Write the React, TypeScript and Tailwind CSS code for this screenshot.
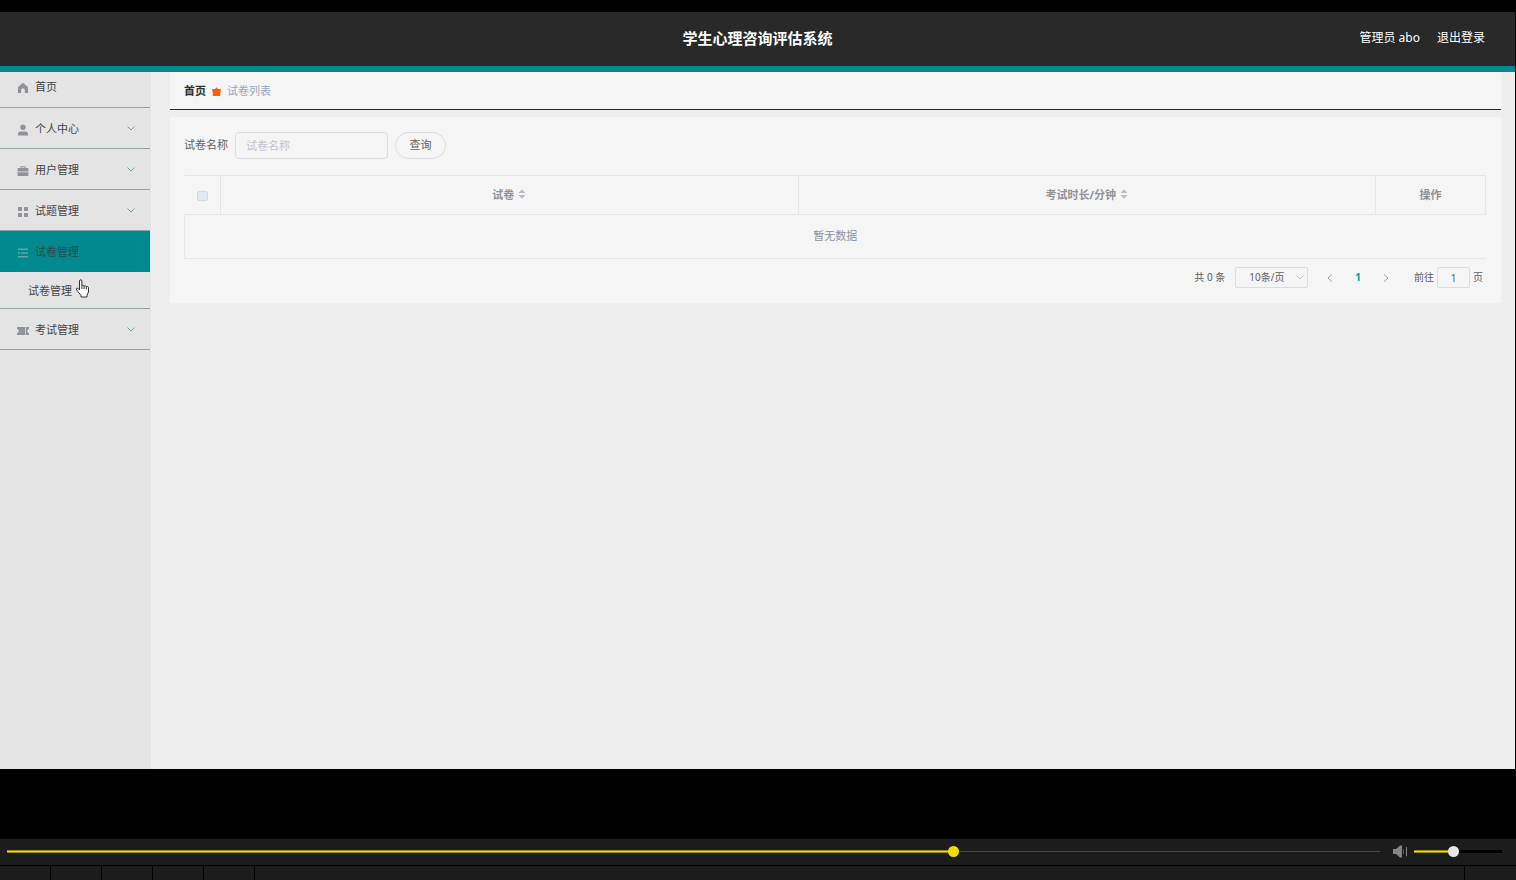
import React, { useState } from "react";

interface MenuItem {
  id: number;
  name: string;
  icon: React.ReactNode;
  children?: string[];
}

const HomeIcon = () => (
  <svg width="12" height="12" viewBox="0 0 12 12" fill="currentColor">
    <path d="M6 .8 11 5v6H7.800V8.200C7.800 6.900 7.100 6.200 6 6.200S4.200 6.900 4.200 8.200V11H1V5z" />
  </svg>
);

const UserIcon = () => (
  <svg width="12" height="12" viewBox="0 0 12 12" fill="currentColor">
    <circle cx="6" cy="3.3" r="2.7" />
    <path d="M1 11.400V9.800C1 8.300 2 7.400 3.500 7.400h5c1.500 0 2.500.9 2.500 2.400v1.600z" />
  </svg>
);

const CaseIcon = () => (
  <svg width="12" height="12" viewBox="0 0 12 12" fill="currentColor">
    <path d="M3.500 3V1.300h5V3h-1V2.200h-3V3z" />
    <path d="M.6 3h10.800v3.500H.6zM.6 7.300h10.800V11H.6z" />
  </svg>
);

const GridIcon = () => (
  <svg width="12" height="12" viewBox="0 0 12 12" fill="currentColor">
    <path d="M1 1h4v4H1zM7 1h4v4H7zM1 7h4v4H1zM7 7h4v4H7z" />
  </svg>
);

const ListIcon = () => (
  <svg width="12" height="12" viewBox="0 0 12 12" fill="currentColor">
    <path d="M1 1.500h10v1.500H1zM1 5.300h2v1.500H1zM4 5.300h7v1.500H4zM1 9h10v1.500H1z" />
  </svg>
);

const TicketIcon = () => (
  <svg width="12" height="12" viewBox="0 0 12 12" fill="currentColor">
    <path d="M0 2h8.300v8H0V8c1 0 1.700-.8 1.700-2S1 4 0 4zM9 2h3v2c-1 0-1.700.8-1.700 2S11 8 12 8v2H9z" />
  </svg>
);

const GiftIcon = () => (
  <svg width="9" height="10" viewBox="0 0 9 10" fill="#ff5c0a">
    <path d="M.3 2h2.900L4.500.3 5.800 2h2.900v3H8.200v4H.8V5H.3z" />
  </svg>
);

const Chevron = ({ className, d }: { className: string; d: string }) => (
  <svg
    className={className}
    width="8"
    height="8"
    viewBox="0 0 8 8"
    fill="none"
    stroke="currentColor"
  >
    <path d={d} />
  </svg>
);

const DOWN = "M.5 2.500 4 6l3.500-3.500";
const LEFT = "M5.800.5 2 4l3.800 3.500";
const RIGHT = "M2.200.5 6 4 2.200 7.500";

const SortIcon = () => (
  <svg
    className="mb-0.5"
    width="8"
    height="10"
    viewBox="0 0 8 10"
    fill="#b9bcc4"
  >
    <path d="M4 .3 7.500 4h-7zM4 9.700.5 6h7z" />
  </svg>
);

const HandCursor = () => (
  <svg
    className="pointer-events-none absolute left-[75px] top-[7px]"
    width="15"
    height="19"
    viewBox="0 0 15 19"
    fill="#fff"
    stroke="#333"
    strokeLinejoin="round"
  >
    <path d="M4.500 11V2c0-1.700 2.400-1.700 2.400 0v5c0-1 2.200-1 2.200.4 0-1 2.200-.9 2.200.5 0-.8 2.200-.7 2.200.8V13l-1.500 3.200V18H6v-1.500L2.800 12.500c-.7-1-1.800-2-1.500-2.900.6-1.100 2.200-.2 3.200 1.400z" />
    <path d="M6.900 7v3M9.100 7.400V10M11.300 8v2.300" />
  </svg>
);

const SpeakerIcon = () => (
  <svg width="15" height="13" viewBox="0 0 15 13" fill="#858585">
    <path d="M0 4h3l4-3.500h2v12H7L3 9H0z" />
    <path d="M10 4h1v5h-1z" fill="#555" />
    <path d="M13 2h1v9h-1z" />
  </svg>
);

const menu: MenuItem[] = [
  { id: 2, name: "个人中心", icon: <UserIcon /> },
  { id: 3, name: "用户管理", icon: <CaseIcon /> },
  { id: 4, name: "试题管理", icon: <GridIcon /> },
  { id: 5, name: "试卷管理", icon: <ListIcon />, children: ["试卷管理"] },
  { id: 6, name: "考试管理", icon: <TicketIcon /> },
];

const Sidebar: React.FC = () => {
  const [openId, setOpenId] = useState(5);

  return (
    <nav className="w-[151px] shrink-0 bg-[#e4e4e4] pr-px text-[11px] text-[#444]">
      <a
        href="#home"
        className="flex h-9 items-center gap-1.5 border-b border-[#94a3a3] pb-1 pl-[17px]"
      >
        <span className="text-[#909399]">
          <HomeIcon />
        </span>
        首页
      </a>
      {menu.map((item) => {
        const active = item.id === openId;
        return (
          <div key={item.id}>
            <button
              type="button"
              onClick={() => setOpenId(item.id)}
              className={`flex h-[41px] w-full items-center gap-1.5 border-b pl-[17px] pr-[15px] pt-[3px] ${
                active
                  ? "border-[#00898f] bg-[#00898f] text-[#2d4a4c]"
                  : "border-[#94a3a3]"
              }`}
            >
              <span className={active ? "text-[#6aa3a6]" : "text-[#909399]"}>
                {item.icon}
              </span>
              {item.name}
              {!active && (
                <Chevron className="mb-1 ml-auto text-[#6fa8a3]" d={DOWN} />
              )}
            </button>
            {active &&
              item.children?.map((child) => (
                <a
                  key={child}
                  href="#paper"
                  className="relative flex h-[37px] items-center border-b border-[#94a3a3] pl-7 pt-0.5"
                >
                  {child}
                  <HandCursor />
                </a>
              ))}
          </div>
        );
      })}
    </nav>
  );
};

const PaperTable: React.FC = () => (
  <table className="w-full table-fixed border-collapse text-[11px] text-[#909399]">
    <colgroup>
      <col className="w-9" />
      <col />
      <col />
      <col className="w-[110px]" />
    </colgroup>
    <thead>
      <tr className="h-[39px]">
        <th className="border-y border-r border-[#e6e6e8]">
          <input
            type="checkbox"
            disabled
            aria-label="全选"
            className="mx-auto mt-0.5 block h-[10px] w-[11px] appearance-none rounded-xs border border-[#d5d9e2] bg-[#e4e8f1]"
          />
        </th>
        {["试卷", "考试时长/分钟"].map((title) => (
          <th key={title} className="border border-[#e6e6e8] font-bold">
            <div className="flex items-center justify-center gap-1">
              {title}
              <SortIcon />
            </div>
          </th>
        ))}
        <th className="border border-[#e6e6e8] font-bold">操作</th>
      </tr>
    </thead>
    <tbody>
      <tr className="h-11">
        <td colSpan={4} className="border-y border-l border-[#e6e6e8] text-center">
          暂无数据
        </td>
      </tr>
    </tbody>
  </table>
);

const Pagination: React.FC = () => (
  <div className="mt-2 flex h-[21px] items-center justify-end pr-[3px] text-[10px] text-[#606266]">
    <span className="mr-2.5">共 0 条</span>
    <div className="relative">
      <select
        aria-label="每页条数"
        className="block h-[21px] w-[73px] appearance-none rounded-xs border border-[#dcdcdf] pl-[13px]"
      >
        <option>10条/页</option>
        <option>20条/页</option>
        <option>50条/页</option>
      </select>
      <Chevron
        className="pointer-events-none absolute right-1 top-1.5 text-[#c0c4cc]"
        d={DOWN}
      />
    </div>
    <button type="button" aria-label="上一页" className="ml-[18px]">
      <Chevron className="text-[#9a9da4]" d={LEFT} />
    </button>
    <button type="button" className="mx-[21px] font-bold text-[#00a096]">
      1
    </button>
    <button type="button" aria-label="下一页" className="mr-6">
      <Chevron className="text-[#9a9da4]" d={RIGHT} />
    </button>
    <label className="flex items-center gap-[3px]">
      前往
      <input
        type="text"
        defaultValue="1"
        className="h-[21px] w-[33px] rounded-xs border border-[#dcdcdf] text-center"
      />
    </label>
    <span className="ml-[3px]">页</span>
  </div>
);

interface SliderProps {
  label: string;
  initial: number;
  rest: string;
  restLine: string;
  className: string;
}

const Slider: React.FC<SliderProps> = ({
  label,
  initial,
  rest,
  restLine,
  className,
}) => {
  const [value, setValue] = useState(initial);
  const stop = `${value / 10}%`;

  return (
    <input
      type="range"
      min={0}
      max={1000}
      value={value}
      aria-label={label}
      onChange={(e) => setValue(Number(e.target.value))}
      className={`block h-[11px] appearance-none bg-[length:100%_1px,100%_3px] bg-center bg-no-repeat [&::-webkit-slider-thumb]:h-[11px] [&::-webkit-slider-thumb]:w-[11px] [&::-webkit-slider-thumb]:appearance-none [&::-webkit-slider-thumb]:rounded-full ${className}`}
      style={{
        backgroundImage: `linear-gradient(to right, #f5dc00 ${stop}, ${restLine} ${stop}), linear-gradient(to right, #9c8b0a ${stop}, ${rest} ${stop})`,
      }}
    />
  );
};

const App: React.FC = () => {
  return (
    <div className="flex min-h-screen flex-col bg-black pt-3 font-['Noto_Sans','Noto_Sans_CJK_SC',sans-serif]">
      <div className="mr-px flex flex-1 flex-col bg-[#eeeeee]">
        <header className="grid h-[60px] grid-cols-[1fr_auto_1fr] items-center border-b-6 border-[#00898f] bg-[#292929] pb-0.5 text-white">
          <h1 className="col-start-2 text-[15px] font-bold">
            学生心理咨询评估系统
          </h1>
          <div className="flex justify-end gap-[17px] pr-[30px] text-xs">
            <span>管理员 abo</span>
            <button type="button">退出登录</button>
          </div>
        </header>

        <div className="flex flex-1">
          <Sidebar />
          <main className="min-w-0 flex-1 pl-[19px] pr-3.5">
            <div className="flex h-[38px] items-center gap-1.5 border-b border-[#292929] bg-[#f5f5f5] px-3.5 pt-0.5 text-[11px]">
              <a href="#home" className="font-bold text-[#303133]">
                首页
              </a>
              <GiftIcon />
              <span className="text-[#97a8be]">试卷列表</span>
            </div>

            <section className="mt-[7px] bg-[#f5f5f5] pb-[15px] pl-3.5 pr-[15px] pt-[15px]">
              <form
                className="mb-4 flex items-center gap-[7px] text-[11px] text-[#606266]"
                onSubmit={(e) => e.preventDefault()}
              >
                <label htmlFor="paper-name">试卷名称</label>
                <input
                  id="paper-name"
                  type="text"
                  placeholder="试卷名称"
                  className="h-[27px] w-[153px] rounded-sm border border-[#dcdcdf] px-2.5 placeholder:text-[#c0c4cc]"
                />
                <button
                  type="submit"
                  className="h-[27px] w-[51px] rounded-full border border-[#dcdcdf]"
                >
                  查询
                </button>
              </form>
              <PaperTable />
              <Pagination />
            </section>
          </main>
        </div>
      </div>

      <footer className="pt-[70px]">
        <div className="flex h-[26px] items-center bg-[#1c1c1c] pb-px pl-[7px] pr-3.5">
          <Slider
            label="播放进度"
            initial={691}
            rest="transparent"
            restLine="#484848"
            className="min-w-0 flex-1 [&::-webkit-slider-thumb]:bg-[#f5dc00]"
          />
          <button type="button" aria-label="静音" className="ml-[13px] mr-1.5">
            <SpeakerIcon />
          </button>
          <Slider
            label="音量"
            initial={440}
            rest="#000"
            restLine="#000"
            className="w-[88px] [&::-webkit-slider-thumb]:bg-[#e8e8e8]"
          />
        </div>
        <div className="flex h-[15px] border-t border-black bg-[#1c1c1c]">
          {[1, 2, 3, 4, 5].map((cell) => (
            <div key={cell} className="w-[51px] border-r border-black" />
          ))}
          <div className="ml-auto w-[52px] border-l border-black" />
        </div>
      </footer>
    </div>
  );
};

export default App;
